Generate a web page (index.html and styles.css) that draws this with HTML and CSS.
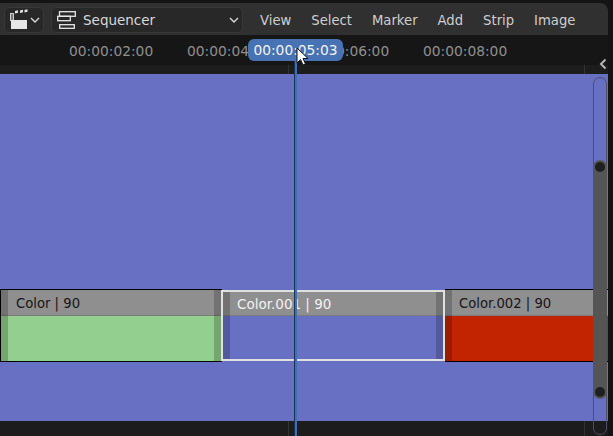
FILE: index.html
```html
<!DOCTYPE html>
<html lang="en">
<head>
  <meta charset="UTF-8">
  <title>Sequencer</title>
  <link rel="stylesheet" href="styles.css">
</head>
<body>
  <div class="editor">
    <div class="header">
      <div class="dropdown editor-type">
        <svg class="icon" width="20" height="22" viewBox="0 0 20 22">
          <rect x="1.5" y="4.500" width="3" height="7" fill="#777" stroke="#ccc"/>
          <path d="M6 2l3-.8v2.600l-3 .8zM11 1.500l3-.8v2.600l-3 .8zM15.500 1l3-.8v2.600l-3 .8z" fill="#e6e6e6"/>
          <rect x="2" y="11" width="16" height="9" fill="#e6e6e6"/>
        </svg>
        <svg class="chevron" width="10" height="6" viewBox="0 0 10 6"><path d="M1 1l4 4 4-4" fill="none" stroke="#d8d8d8" stroke-width="1.4"/></svg>
      </div>
      <div class="dropdown mode">
        <svg class="icon" width="19" height="18" viewBox="0 0 19 18" fill="none" stroke="#e6e6e6" stroke-width="1.300">
          <rect x="2.500" y="0.700" width="15.800" height="4.600"/>
          <rect x="0.700" y="5.300" width="12.600" height="4.400"/>
          <rect x="2.700" y="13.700" width="14.600" height="3.600"/>
        </svg>
        <span class="mode-label">Sequencer</span>
        <svg class="chevron" width="10" height="6" viewBox="0 0 10 6"><path d="M1 1l4 4 4-4" fill="none" stroke="#d8d8d8" stroke-width="1.4"/></svg>
      </div>
      <nav class="menu">
        <span>View</span>
        <span>Select</span>
        <span>Marker</span>
        <span>Add</span>
        <span>Strip</span>
        <span>Image</span>
      </nav>
    </div>

    <div class="ruler">
      <span class="tick-label t2">00:00:02:00</span>
      <span class="tick-label t4">00:00:04:00</span>
      <span class="tick-label t6">00:00:06:00</span>
      <span class="tick-label t8">00:00:08:00</span>
      <span class="current-frame">00:00:05:03</span>
      <svg class="region-arrow" width="8" height="12" viewBox="0 0 8 12"><path d="M6.500 1.500L2 6l4.500 4.500" fill="none" stroke="#b4b4b4" stroke-width="2"/></svg>
    </div>
    <div class="scrub-band"></div>

    <div class="canvas">
      <div class="strip strip-green">
        <div class="strip-title">Color | 90</div>
        <div class="strip-body"></div>
      </div>
      <div class="strip strip-blue">
        <div class="strip-title">Color.001 | 90</div>
        <div class="strip-body"></div>
      </div>
      <div class="strip strip-red">
        <div class="strip-title">Color.002 | 90</div>
        <div class="strip-body"></div>
      </div>

      <div class="scrollbar">
        <div class="scroll-thumb">
          <span class="scroll-dot dot-top"></span>
          <span class="scroll-dot dot-bottom"></span>
        </div>
      </div>
    </div>

    <div class="footer"></div>

    <div class="grid-line line-a"></div>
    <div class="grid-line line-b"></div>
    <div class="grid-line line-c"></div>
    <div class="grid-line line-d"></div>
    <div class="playhead"></div>
    <svg class="cursor" width="14" height="20" viewBox="0 0 14 20">
      <path d="M1 1v15l3.500-3.500 2.500 5.500 2.500-1-2.500-5.500h5z" fill="#fff" stroke="#111" stroke-width="1"/>
    </svg>
  </div>
</body>
</html>
```

FILE: styles.css
```css
* {
  box-sizing: border-box;
}

body {
  margin: 0;
  background-color: #141414;
  font-family: "DejaVu Sans", sans-serif;
  overflow: hidden;
}

.editor {
  position: relative;
  width: 613px;
  height: 436px;
  padding: 3px 5px 0 0;
  display: flex;
  flex-direction: column;
  overflow: hidden;
}

/* header */
.header {
  height: 32px;
  background-color: #303030;
  border-top-right-radius: 8px;
  display: flex;
  align-items: center;
  padding: 2px 0 0 4px;
  flex-shrink: 0;
}

.dropdown {
  height: 26px;
  background-color: #282828;
  border: 1px solid #383838;
  border-radius: 5px;
  display: flex;
  align-items: center;
  color: #d8d8d8;
}

.editor-type {
  width: 40px;
  padding-left: 4px;
  gap: 1px;
}

.mode {
  width: 192px;
  margin-left: 7px;
  padding: 0 3px 0 5px;
  font-size: 13.500px;
}

.mode-label {
  margin-left: 7px;
  flex: 1;
}

.menu {
  display: flex;
  gap: 20px;
  margin-left: 17px;
  font-size: 13.200px;
  color: #cfcfcf;
}

/* time ruler */
.ruler {
  position: relative;
  height: 30px;
  background-color: #161616;
  flex-shrink: 0;
  font-size: 13.800px;
}

.tick-label {
  position: absolute;
  top: 8px;
  color: #8f8f8f;
}

.t2 { left: 69px; }
.t4 { left: 187px; }
.t6 { left: 305px; }
.t8 { left: 423px; }

.current-frame {
  position: absolute;
  left: 248px;
  top: 4px;
  width: 95px;
  height: 22px;
  background-color: #4772b3;
  border-radius: 6px;
  color: #f2f2f2;
  text-align: center;
  line-height: 23px;
}

.region-arrow {
  position: absolute;
  left: 599px;
  top: 23px;
}

.scrub-band {
  height: 9px;
  background-color: #1d1d1d;
  flex-shrink: 0;
}

/* strips */
.canvas {
  position: relative;
  height: 347px;
  background-color: #6870c3;
  flex-shrink: 0;
}

.strip {
  position: absolute;
  top: 215px;
  height: 73px;
  display: flex;
  flex-direction: column;
  border: 1px solid #000;
  border-width: 1px 0;
}

.strip::before,
.strip::after {
  content: "";
  position: absolute;
  top: 0;
  bottom: 0;
  width: 7px;
  background-color: rgba(0, 0, 0, 0.2);
}

.strip::before { left: 0; }
.strip::after { right: 0; }

.strip-title {
  height: 26px;
  background-color: #8f8f8f;
  border-bottom: 1px solid #7b7b7b;
  padding-left: 15px;
  font-size: 13.200px;
  line-height: 27px;
  color: #161616;
  white-space: nowrap;
}

.strip-body {
  flex: 1;
}

.strip-green {
  left: 0;
  width: 222px;
  border-left-width: 1px;
  border-right-width: 1px;
}

.strip-green .strip-body {
  background-color: #93d08f;
}

.strip-blue {
  left: 221px;
  top: 216px;
  width: 224px;
  height: 71px;
  border: 2px solid #e0e0e0;
}

.strip-blue .strip-title {
  color: #f2f2f2;
  height: 24px;
  line-height: 25px;
  padding-left: 14px;
  font-size: 13.500px;
}

.strip-red {
  left: 445px;
  width: 163px;
}

.strip-red .strip-title {
  padding-left: 14px;
}

.strip-red .strip-body {
  background-color: #c22300;
}

.strip-red::after {
  display: none;
}

/* scrollbar */
.scrollbar {
  position: absolute;
  left: 593px;
  top: 3px;
  width: 14px;
  height: 358px;
  border: 1px solid #4d4f66;
  border-radius: 7px;
}

.scroll-thumb {
  position: absolute;
  left: -1px;
  top: 82px;
  width: 14px;
  height: 239px;
  background-color: #555;
  border-radius: 7px;
}

.scroll-dot {
  position: absolute;
  left: 2px;
  width: 10px;
  height: 10px;
  background-color: #1f1f1f;
  border-radius: 50%;
}

.dot-top { top: 2px; }
.dot-bottom { bottom: 2px; }

.footer {
  flex: 1;
  background-color: #1c1c1c;
}

/* overlays */
.grid-line {
  position: absolute;
  width: 1px;
  height: 9px;
  top: 65px;
  background-color: #333;
}

.line-a { left: 288px; }
.line-b { left: 584px; }

.line-c,
.line-d {
  top: 421px;
  height: 15px;
}

.line-c { left: 288px; }
.line-d { left: 584px; }

.playhead {
  position: absolute;
  left: 294px;
  top: 61px;
  width: 3px;
  height: 375px;
  background-color: #3e70b8;
  border-left: 1px solid #1d3152;
}

.cursor {
  position: absolute;
  left: 296px;
  top: 47px;
}
```
